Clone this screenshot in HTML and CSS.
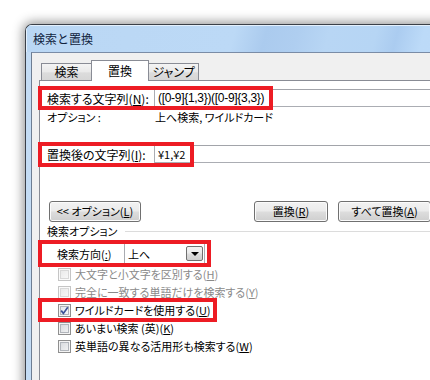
FILE: index.html
```html
<!DOCTYPE html>
<html lang="ja">
<head>
<meta charset="utf-8">
<title>検索と置換</title>
<link rel="stylesheet" href="styles.css">
</head>
<body>
<div class="stage">
  <div class="window">
    <div class="titlebar">検索と置換</div>
    <div class="client">
      <div class="tabs">
        <div class="tab">検索</div>
        <div class="tab sel">置換</div>
        <div class="tab last">ジャンプ</div>
      </div>
      <div class="panel">
        <div class="field first">
          <span class="lbl">検索する文字列(<u>N</u>):</span>
          <div class="input mono">([0-9]{1,3})([0-9]{3,3})</div>
        </div>
        <div class="info">
          <span class="lbl">オプション :</span>
          <span class="val">上へ検索, ワイルドカード</span>
        </div>
        <div class="field second">
          <span class="lbl">置換後の文字列(<u>I</u>):</span>
          <div class="input">¥1,¥2</div>
        </div>
        <div class="buttons">
          <div class="btn opt">&lt;&lt; オプション(<u>L</u>)</div>
          <div class="btn rep">置換(<u>R</u>)</div>
          <div class="btn all">すべて置換(<u>A</u>)</div>
        </div>
        <div class="group">
          <span class="gtitle">検索オプション</span>
          <span class="gline"></span>
        </div>
        <div class="dir">
          <span class="dlbl">検索方向(<u>:</u>)</span>
          <div class="select">
            <span class="sval">上へ</span>
            <span class="sbtn"><span class="tri"></span></span>
          </div>
        </div>
        <div class="checks">
          <div class="chk dis"><span class="box"></span><span>大文字と小文字を区別する(<u>H</u>)</span></div>
          <div class="chk dis"><span class="box"></span><span>完全に一致する単語だけを検索する(<u>Y</u>)</span></div>
          <div class="chk on"><span class="box"><svg viewBox="0 0 13 13" width="13" height="13"><path d="M3.2 6.6 L5.4 9.4 L9.8 3.2" fill="none" stroke="#3b5196" stroke-width="1.7"/></svg></span><span>ワイルドカードを使用する(<u>U</u>)</span></div>
          <div class="chk"><span class="box"></span><span>あいまい検索 (英)(<u>K</u>)</span></div>
          <div class="chk"><span class="box"></span><span>英単語の異なる活用形も検索する(<u>W</u>)</span></div>
        </div>
      </div>
    </div>
  </div>
  <div class="mark m1"></div>
  <div class="mark m2"></div>
  <div class="mark m3"></div>
  <div class="mark m4"></div>
</div>
</body>
</html>
```
FILE: styles.css
```css
html, body {
  margin: 0;
  padding: 0;
  background: #ffffff;
}
body {
  font-family: "Noto Sans CJK JP", "Noto Sans", sans-serif;
  font-size: 11px;
  color: #000;
  font-feature-settings: "palt";
}
u {
  text-decoration: underline;
  text-underline-offset: 1px;
}
.stage {
  position: relative;
  width: 430px;
  height: 380px;
  overflow: hidden;
}
.window {
  margin: 24px 0 0 25px;
  width: 520px;
  height: 420px;
  box-sizing: border-box;
  border: 1px solid #3b4048;
  border-right: none;
  border-radius: 7px 0 0 0;
  background: #c4dcf4;
  box-shadow: 0 0 11px 2px rgba(0, 0, 0, 0.42);
  display: flex;
  flex-direction: column;
  overflow: hidden;
}
.titlebar {
  height: 27px;
  line-height: 27px;
  padding-left: 7px;
  font-size: 12px;
  font-feature-settings: normal;
  color: #10233d;
  background: linear-gradient(105deg, #bad7f4 0%, #bcd9f6 40%, #abcbee 46%, #afcef0 52%, #b8d6f4 58%, #b6d5f4 67%, #abccf0 71%, #bcdaf8 76%, #bedcf9 100%);
  box-shadow: inset 1px 1px 0 #e4f0fc;
}
.client {
  flex: 1;
  margin-left: 5px;
  border-top: 1px solid #7a8ca6;
  border-left: 1px solid #6d7d92;
  background: #f0f0f0;
  padding: 7px 0 0 7px;
}
.tabs {
  position: relative;
  z-index: 1;
  display: flex;
  align-items: flex-end;
  height: 21px;
  margin-bottom: -1px;
  padding-left: 2px;
  font-size: 12px;
}
.tab {
  box-sizing: border-box;
  width: 51px;
  height: 17px;
  margin-bottom: 1px;
  border: 1px solid #898c95;
  border-bottom: none;
  background: linear-gradient(#f4f4f4, #e9e9e9 50%, #dcdcdc 55%, #d6d6d6);
  text-align: center;
  line-height: 16px;
}
.tab.sel {
  width: 58px;
  height: 21px;
  margin-bottom: 0;
  margin-left: -1px;
  background: #ffffff;
  line-height: 19px;
}
.tab.last {
  margin-left: -1px;
}
.panel {
  border: 1px solid #898c95;
  border-right: none;
  background: #ffffff;
  padding-left: 7px;
  height: 400px;
}
.field {
  display: flex;
  align-items: center;
  height: 18px;
}
.field .lbl {
  font-size: 12px;
}
.field.first {
  margin-top: 8px;
}
.field.second {
  margin-top: 18px;
}
.lbl {
  width: 107px;
  flex: none;
  white-space: nowrap;
}
.input {
  flex: 1;
  box-sizing: border-box;
  height: 18px;
  border: 1px solid #abadb3;
  border-top-color: #a2a4aa;
  border-right: none;
  padding-left: 3px;
  line-height: 16px;
  white-space: nowrap;
}
.mono {
  font-family: "Liberation Sans", sans-serif;
  font-size: 12px;
  letter-spacing: -0.3px;
}
.info {
  display: flex;
  align-items: center;
  height: 20px;
}
.info .val {
  padding-left: 1px;
}
.buttons {
  display: flex;
  margin-top: 38px;
  height: 21px;
}
.btn {
  box-sizing: border-box;
  height: 21px;
  border: 1px solid #707070;
  border-radius: 3px;
  background: linear-gradient(#f2f2f2 0%, #ebebeb 48%, #dddddd 52%, #cfcfcf 100%);
  box-shadow: inset 0 0 0 1px #fbfbfb;
  text-align: center;
  line-height: 19px;
  white-space: nowrap;
}
.btn.opt {
  width: 92px;
  margin-left: 2px;
}
.btn.rep {
  width: 74px;
  margin-left: 113px;
}
.btn.all {
  width: 93px;
  margin-left: 10px;
}
.group {
  display: flex;
  align-items: center;
  height: 18px;
}
.gtitle {
  white-space: nowrap;
}
.gline {
  flex: 1;
  height: 1px;
  background: #dcdcdc;
  margin-left: 8px;
}
.dir {
  display: flex;
  align-items: center;
  margin-top: 3px;
  height: 21px;
  padding-left: 10px;
}
.dlbl {
  width: 67px;
  flex: none;
  white-space: nowrap;
}
.select {
  box-sizing: border-box;
  width: 81px;
  height: 21px;
  border: 1px solid #a9abb1;
  background: #fff;
  display: flex;
  align-items: center;
  justify-content: space-between;
  padding: 0 1px 0 3px;
}
.sbtn {
  box-sizing: border-box;
  width: 17px;
  height: 15px;
  border: 1px solid #707070;
  border-radius: 2px;
  background: linear-gradient(#f2f2f2 0%, #ebebeb 48%, #dddddd 52%, #cfcfcf 100%);
  display: flex;
  align-items: center;
  justify-content: center;
}
.tri {
  width: 0;
  height: 0;
  border-left: 4px solid transparent;
  border-right: 4px solid transparent;
  border-top: 4px solid #000;
}
.checks {
  margin-top: 1px;
}
.chk {
  display: flex;
  align-items: center;
  height: 18px;
  margin-left: 11px;
  gap: 4px;
  white-space: nowrap;
}
.box {
  box-sizing: border-box;
  width: 13px;
  height: 13px;
  flex: none;
  border: 1px solid #8f8f8f;
  background: linear-gradient(135deg, #d2d5da, #f7f7f7);
  box-shadow: inset 0 0 0 1px #f4f4f4, inset 0 0 0 2px #b1b5bb;
  position: relative;
}
.box svg {
  position: absolute;
  left: -1px;
  top: -1px;
}
.chk.dis {
  color: #8a8a8a;
}
.chk.dis .box {
  border-color: #c5c5c5;
  background: linear-gradient(135deg, #e6e6e6, #fbfbfb);
  box-shadow: inset 0 0 0 1px #fafafa, inset 0 0 0 2px #d8d8d8;
}
.chk.on .box {
  background: linear-gradient(135deg, #dfe3ea, #fafafa);
}
.mark {
  position: absolute;
  box-sizing: border-box;
  border: 4px solid #ed1c24;
}
.m1 {
  left: 38px;
  top: 86px;
  width: 235px;
  height: 24px;
}
.m2 {
  left: 38px;
  top: 142px;
  width: 156px;
  height: 25px;
}
.m3 {
  left: 38px;
  top: 240px;
  width: 173px;
  height: 27px;
}
.m4 {
  left: 38px;
  top: 298px;
  width: 179px;
  height: 24px;
}
```
